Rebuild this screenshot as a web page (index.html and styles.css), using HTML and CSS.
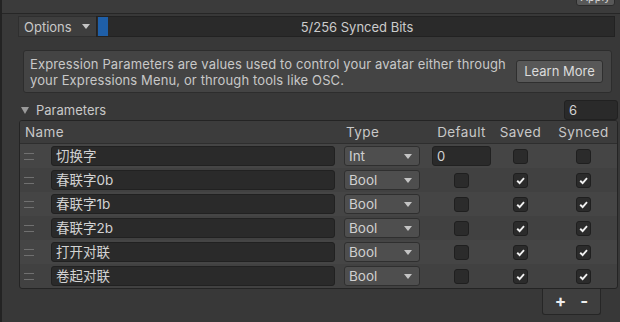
FILE: index.html
```html
<!DOCTYPE html>
<html lang="en">
<head>
    <meta charset="UTF-8">
    <title>Expression Parameters</title>
    <link rel="stylesheet" href="styles.css">
</head>
<body>
    <div class="window">
        <div class="top-strip">
            <div class="apply-btn">Apply</div>
        </div>

        <div class="toolbar">
            <div class="options-btn">Options <span class="arrow"></span></div>
            <div class="bits-bar">
                <div class="bits-fill"></div>
                <span class="bits-label">5/256 Synced Bits</span>
            </div>
        </div>

        <div class="help-box">
            <p>Expression Parameters are values used to control your avatar either through your Expressions Menu, or through tools like OSC.</p>
            <div class="learn-btn">Learn More</div>
        </div>

        <div class="foldout">
            <span class="fold-arrow"></span>
            <span class="fold-title">Parameters</span>
            <div class="count-field">6</div>
        </div>

        <div class="param-table">
            <div class="param-row head">
                <div class="col-name">Name</div>
                <div class="col-type">Type</div>
                <div class="col-mid">Default</div>
                <div class="col-mid">Saved</div>
                <div class="col-mid">Synced</div>
            </div>

            <div class="param-row">
                <div class="handle"></div>
                <div class="field name-field">切换字</div>
                <div class="dropdown">Int</div>
                <div class="col-mid"><div class="field num-field">0</div></div>
                <div class="col-mid"><div class="check"></div></div>
                <div class="col-mid"><div class="check"></div></div>
            </div>
            <div class="param-row">
                <div class="handle"></div>
                <div class="field name-field">春联字0b</div>
                <div class="dropdown">Bool</div>
                <div class="col-mid"><div class="check"></div></div>
                <div class="col-mid"><div class="check on"><svg viewBox="0 0 10 10"><polyline points="2,5.2 4.2,7.3 8.2,2.8"/></svg></div></div>
                <div class="col-mid"><div class="check on"><svg viewBox="0 0 10 10"><polyline points="2,5.2 4.2,7.3 8.2,2.8"/></svg></div></div>
            </div>
            <div class="param-row">
                <div class="handle"></div>
                <div class="field name-field">春联字1b</div>
                <div class="dropdown">Bool</div>
                <div class="col-mid"><div class="check"></div></div>
                <div class="col-mid"><div class="check on"><svg viewBox="0 0 10 10"><polyline points="2,5.2 4.2,7.3 8.2,2.8"/></svg></div></div>
                <div class="col-mid"><div class="check on"><svg viewBox="0 0 10 10"><polyline points="2,5.2 4.2,7.3 8.2,2.8"/></svg></div></div>
            </div>
            <div class="param-row">
                <div class="handle"></div>
                <div class="field name-field">春联字2b</div>
                <div class="dropdown">Bool</div>
                <div class="col-mid"><div class="check"></div></div>
                <div class="col-mid"><div class="check on"><svg viewBox="0 0 10 10"><polyline points="2,5.2 4.2,7.3 8.2,2.8"/></svg></div></div>
                <div class="col-mid"><div class="check on"><svg viewBox="0 0 10 10"><polyline points="2,5.2 4.2,7.3 8.2,2.8"/></svg></div></div>
            </div>
            <div class="param-row">
                <div class="handle"></div>
                <div class="field name-field">打开对联</div>
                <div class="dropdown">Bool</div>
                <div class="col-mid"><div class="check"></div></div>
                <div class="col-mid"><div class="check on"><svg viewBox="0 0 10 10"><polyline points="2,5.2 4.2,7.3 8.2,2.8"/></svg></div></div>
                <div class="col-mid"><div class="check on"><svg viewBox="0 0 10 10"><polyline points="2,5.2 4.2,7.3 8.2,2.8"/></svg></div></div>
            </div>
            <div class="param-row">
                <div class="handle"></div>
                <div class="field name-field">卷起对联</div>
                <div class="dropdown">Bool</div>
                <div class="col-mid"><div class="check"></div></div>
                <div class="col-mid"><div class="check on"><svg viewBox="0 0 10 10"><polyline points="2,5.2 4.2,7.3 8.2,2.8"/></svg></div></div>
                <div class="col-mid"><div class="check on"><svg viewBox="0 0 10 10"><polyline points="2,5.2 4.2,7.3 8.2,2.8"/></svg></div></div>
            </div>
        </div>

        <div class="list-footer">
            <span class="footer-btn">+</span>
            <span class="footer-btn">-</span>
        </div>
    </div>
</body>
</html>
```

FILE: styles.css
```css
body {
    margin: 0;
    background-color: #383838;
    font-family: Inter, "Noto Sans CJK SC", sans-serif;
    font-size: 13px;
    color: #c8c8c8;
}
.window {
    width: 618px;
    height: 322px;
    border-left: 2px solid #232323;
    overflow: hidden;
}
.top-strip {
    height: 13px;
    background-color: #3b3b3b;
    border-bottom: 1px solid #262626;
    display: flex;
    justify-content: flex-end;
    padding-right: 5px;
}
.apply-btn {
    width: 37px;
    height: 16px;
    margin-top: -12px;
    background-color: #585858;
    border: 1px solid #2c2c2c;
    border-radius: 3px;
    font-size: 11px;
    line-height: 16px;
    text-align: center;
    color: #dddddd;
}
.toolbar {
    display: flex;
    height: 21px;
    margin: 2px 5px 0 16px;
}
.options-btn {
    width: 72px;
    padding-left: 5px;
    background-color: #3e3e3e;
    border: 1px solid #2f2f2f;
    border-right: none;
    line-height: 20px;
    display: flex;
    align-items: center;
    gap: 10px;
}
.arrow {
    width: 0;
    height: 0;
    border-left: 4px solid transparent;
    border-right: 4px solid transparent;
    border-top: 5px solid #c4c4c4;
}
.bits-bar {
    flex: 1;
    display: flex;
    align-items: center;
    background-color: #2a2a2a;
    border: 1px solid #222222;
}
.bits-fill {
    width: 10px;
    height: 19px;
    margin-left: 1px;
    background-color: #1f5fa8;
}
.bits-label {
    flex: 1;
    text-align: center;
    margin-right: 8px;
    color: #cccccc;
}
.help-box {
    display: flex;
    align-items: center;
    margin: 13px 8px 0 21px;
    height: 41px;
    padding: 0 8px 0 6px;
    background-color: #444444;
    border: 1px solid #2d2d2d;
    border-radius: 3px;
}
.help-box p {
    margin: 0;
    flex: 1;
    line-height: 16px;
    letter-spacing: 0.12px;
}
.learn-btn {
    width: 85px;
    height: 21px;
    line-height: 21px;
    text-align: center;
    background-color: #585858;
    border: 1px solid #2f2f2f;
    border-radius: 3px;
    color: #dcdcdc;
}
.foldout {
    display: flex;
    align-items: center;
    height: 20px;
    margin: 7px 2px 0 19px;
}
.fold-arrow {
    width: 0;
    height: 0;
    border-left: 4px solid transparent;
    border-right: 4px solid transparent;
    border-top: 7px solid #9a9a9a;
    margin-right: 7px;
}
.fold-title {
    flex: 1;
}
.count-field {
    width: 48px;
    height: 18px;
    line-height: 18px;
    padding-left: 4px;
    background-color: #2a2a2a;
    border: 1px solid #212121;
    border-radius: 3px;
    color: #d2d2d2;
}
.param-table {
    margin: 0 2px 0 17px;
    border: 1px solid #242424;
    border-radius: 3px;
    background-color: #414141;
    overflow: hidden;
}
.param-row {
    display: grid;
    grid-template-columns: 31px 294px 87px 59px 59px 1fr;
    align-items: center;
    height: 24px;
}
.param-row:nth-child(even) {
    background-color: #454545;
}
.param-row.head {
    height: 22px;
    background-color: #3c3c3c;
    border-bottom: 1px solid #2e2e2e;
    font-size: 13.5px;
    letter-spacing: 0.4px;
}
.col-name {
    grid-column: 1 / 3;
    padding-left: 5px;
}
.col-type {
    padding-left: 1px;
}
.col-mid {
    display: flex;
    justify-content: center;
}
.handle {
    width: 10px;
    height: 5px;
    margin-left: 4px;
    border-top: 1px solid #707070;
    border-bottom: 1px solid #707070;
}
.field {
    height: 18px;
    line-height: 18px;
    padding-left: 4px;
    background-color: #2a2a2a;
    border: 1px solid #212121;
    border-radius: 3px;
    color: #d2d2d2;
}
.name-field {
    width: 278px;
    font-size: 13.5px;
}
.num-field {
    width: 53px;
}
.dropdown {
    width: 70px;
    height: 18px;
    line-height: 18px;
    padding-left: 4px;
    margin-left: -1px;
    background-color: #4e4e4e;
    border: 1px solid #2f2f2f;
    border-radius: 3px;
    color: #d0d0d0;
    font-size: 13.5px;
    position: relative;
}
.dropdown::after {
    content: "";
    position: absolute;
    right: 7px;
    top: 7px;
    border-left: 4px solid transparent;
    border-right: 4px solid transparent;
    border-top: 5px solid #c4c4c4;
}
.check {
    width: 13px;
    height: 13px;
    background-color: #2b2b2b;
    border: 1px solid #1f1f1f;
    border-radius: 3px;
    display: flex;
    align-items: center;
    justify-content: center;
}
.check svg {
    width: 11px;
    height: 11px;
    fill: none;
    stroke: #f0f0f0;
    stroke-width: 1.7;
}
.list-footer {
    display: flex;
    justify-content: center;
    gap: 14px;
    width: 57px;
    height: 25px;
    margin: 0 0 0 540px;
    background-color: #3e3e3e;
    border: 1px solid #262626;
    border-top: none;
    border-radius: 0 0 3px 3px;
    font-size: 17px;
    font-weight: bold;
    line-height: 24px;
    color: #eeeeee;
}
```
